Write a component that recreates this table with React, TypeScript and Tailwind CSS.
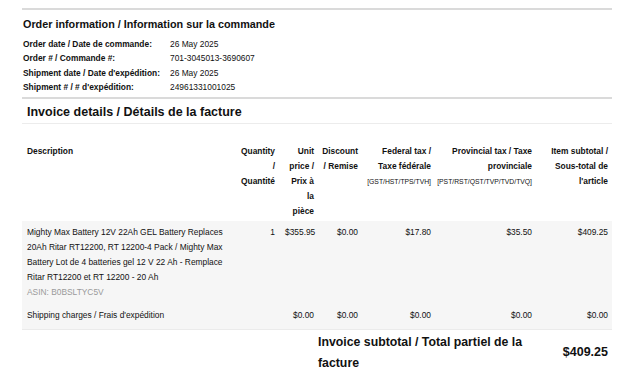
import React from "react";

const Cell = ({ w, children, className = "" }: { w: string; children?: React.ReactNode; className?: string }) => (
  <div className={`flex justify-end pr-[4px] ${className}`}>
    <div className={`${w} text-right`}>{children}</div>
  </div>
);

export default function App() {
  const cols = "grid grid-cols-[213px_44px_39px_44px_73px_101px_1fr]";
  return (
    <div
      className="w-[640px] h-[372px] bg-white overflow-hidden text-[#111]"
      style={{ fontFamily: '"Liberation Sans", Arial, sans-serif' }}
    >
      <div className="ml-[22px] w-[590px] pt-[8px]">
        {/* Order information */}
        <section className="border-t-2 border-[#dadada] pt-[7px] pb-[3px]">
          <h2 className="pl-[1px] text-[10.8px] font-bold leading-[14px]">
            Order information / Information sur la commande
          </h2>
          <div className="mt-[6px] grid grid-cols-[147px_1fr] pl-[1px] text-[8.4px] leading-[14.3px]">
            <div className="font-bold">Order date / Date de commande:</div>
            <div>26 May 2025</div>
            <div className="font-bold">Order # / Commande #:</div>
            <div>701-3045013-3690607</div>
            <div className="font-bold">Shipment date / Date d'expédition:</div>
            <div>26 May 2025</div>
            <div className="font-bold">Shipment # / # d'expédition:</div>
            <div>24961331001025</div>
          </div>
        </section>

        {/* Invoice details */}
        <section className="border-t-2 border-[#dadada]">
          <h2 className="pl-[5px] pt-[5px] pb-[3px] text-[12.5px] font-bold leading-[16px] border-b border-[#ececec]">
            Invoice details / Détails de la facture
          </h2>

          {/* header */}
          <div className={`${cols} pt-[20px] pb-[1.5px] text-[8.4px] font-bold leading-[15px]`}>
            <div className="pl-[5px]">Description</div>
            <Cell w="w-[36px]">Quantity / Quantité</Cell>
            <Cell w="w-[29px]">Unit price / Prix à la pièce</Cell>
            <Cell w="w-[38px]">Discount / Remise</Cell>
            <Cell w="w-[67px]">
              Federal tax / Taxe fédérale
              <div className="text-[6.8px] font-normal whitespace-nowrap">[GST/HST/TPS/TVH]</div>
            </Cell>
            <Cell w="w-[95px]">
              Provincial tax / Taxe provinciale
              <div className="text-[6.8px] font-normal whitespace-nowrap">[PST/RST/QST/TVP/TVD/TVQ]</div>
            </Cell>
            <Cell w="w-[67px]">Item subtotal / Sous-total de l'article</Cell>
          </div>

          {/* body */}
          <div className="bg-[#f6f6f6] border-b border-[#ebebeb] text-[8.4px] leading-[15px]">
            <div className={`${cols} pt-[4.5px] pb-[4px]`}>
              <div className="pl-[5px] pr-[4px]">
                Mighty Max Battery 12V 22Ah GEL Battery Replaces 20Ah Ritar RT12200, RT 12200-4 Pack / Mighty Max
                Battery Lot de 4 batteries gel 12 V 22 Ah - Remplace Ritar RT12200 et RT 12200 - 20 Ah
                <div className="text-[#9a9a9a]">ASIN: B0BSLTYC5V</div>
              </div>
              <Cell w="w-[36px]">1</Cell>
              <Cell w="w-[29px]" className="">
                <span className="whitespace-nowrap">$355.95</span>
              </Cell>
              <Cell w="w-[38px]">$0.00</Cell>
              <Cell w="w-[67px]">$17.80</Cell>
              <Cell w="w-[95px]">$35.50</Cell>
              <Cell w="w-[67px]">$409.25</Cell>
            </div>
            <div className={`${cols} pt-[4px] pb-[6px]`}>
              <div className="pl-[5px]">Shipping charges / Frais d'expédition</div>
              <Cell w="w-[36px]"></Cell>
              <Cell w="w-[29px]">$0.00</Cell>
              <Cell w="w-[38px]">$0.00</Cell>
              <Cell w="w-[67px]">$0.00</Cell>
              <Cell w="w-[95px]">$0.00</Cell>
              <Cell w="w-[67px]">$0.00</Cell>
            </div>
          </div>

          {/* subtotal */}
          <div className={`${cols} pt-[2px] items-center`}>
            <div className="col-span-3"></div>
            <div className="col-span-3 pr-[4px] text-[12.3px] font-bold leading-[20.5px]">
              Invoice subtotal / Total partiel de la facture
            </div>
            <div className="pr-[4px] text-right text-[12.5px] font-bold">$409.25</div>
          </div>
        </section>
      </div>
    </div>
  );
}
